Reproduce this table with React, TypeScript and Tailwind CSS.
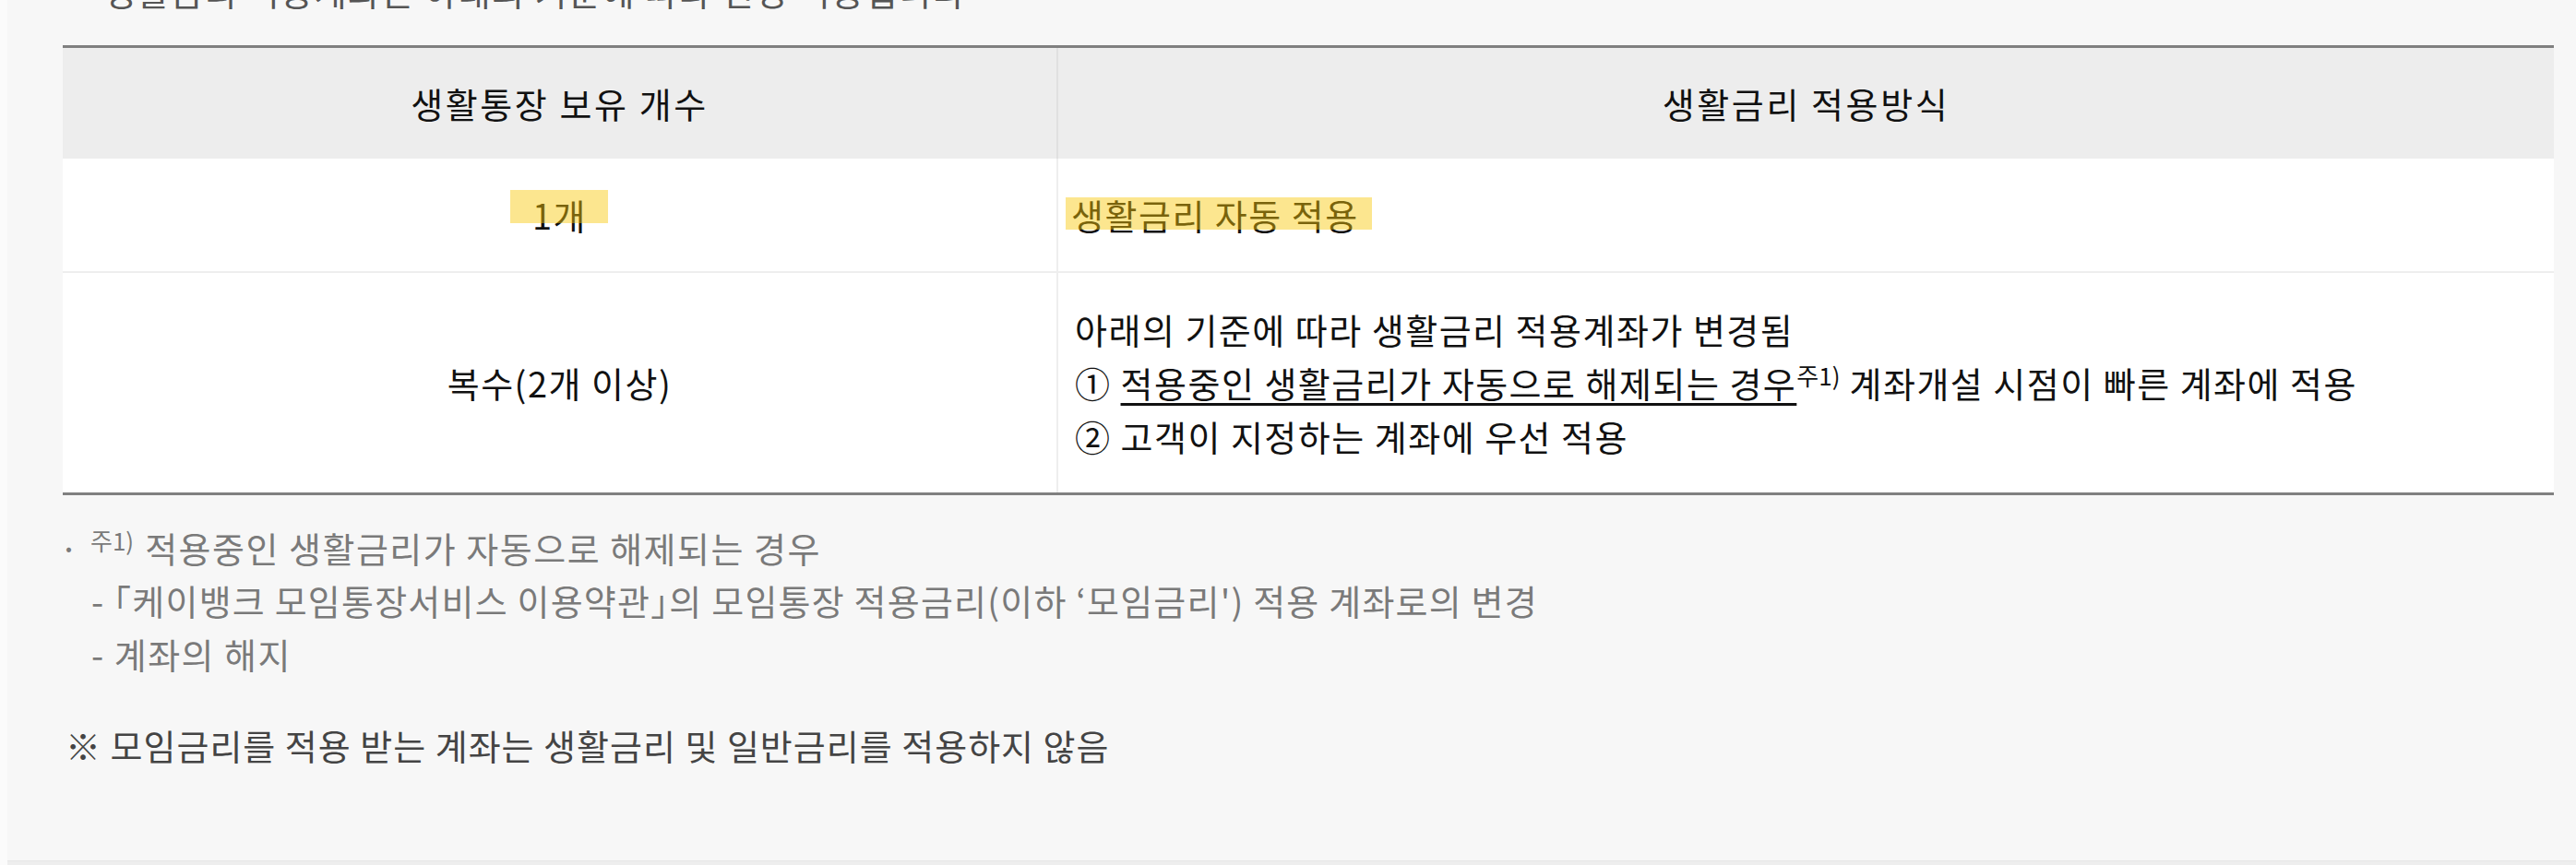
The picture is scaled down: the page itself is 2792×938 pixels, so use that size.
import React from 'react';

// Highlighter mark drawn over the text, like a marker pen
function Marker({ children, box }: { children: React.ReactNode; box: string }) {
  return (
    <span className="relative inline-block">
      {children}
      <span className={`pointer-events-none absolute bg-[#f9c807]/45 ${box}`} />
    </span>
  );
}

export default function App() {
  return (
    <div className="h-[938px] overflow-hidden bg-[#fbfbfb] pl-2 font-['Noto_Sans_CJK_KR','Noto_Sans_CJK_SC',sans-serif] text-[38px] leading-[57.6px] tracking-[1.5px] text-[#111]">
      <div className="h-[933px] overflow-hidden bg-[#f7f7f7] pl-[60px]">
        {/* previous paragraph, scrolled mostly out of view */}
        <p className="-mt-[39px] mb-[30px] pl-[44px] text-[#555]">
          생활금리 적용계좌는 아래의 기준에 따라 변경 적용됩니다
        </p>

        <table className="w-[2700px] table-fixed border-collapse border-y-[3px] border-[#808080]">
          <colgroup>
            <col className="w-[1078px]" />
            <col />
          </colgroup>
          <thead>
            <tr className="h-[122px] bg-[#ededed] tracking-[2.6px]">
              <th className="text-center font-normal">생활통장 보유 개수</th>
              <th className="border-l-2 border-[#e0e0e0] text-center font-normal">생활금리 적용방식</th>
            </tr>
          </thead>
          <tbody className="bg-white">
            <tr className="h-[123px] border-b-2 border-[#eeeeee]">
              <td className="text-center align-middle">
                <Marker box="left-[-24px] right-[-23px] top-[2px] h-[36px]">1개</Marker>
              </td>
              <td className="border-l-2 border-[#eeeeee] pl-[14px] align-middle">
                <Marker box="left-[-6px] right-[-14px] top-[10px] h-[35px]">생활금리 자동 적용</Marker>
              </td>
            </tr>
            <tr className="h-[240px]">
              <td className="text-center align-middle">복수(2개 이상)</td>
              <td className="border-l-2 border-[#eeeeee] pl-[18px] align-middle">
                <p>아래의 기준에 따라 생활금리 적용계좌가 변경됨</p>
                <p>
                  ①{' '}
                  <span className="underline decoration-[3px] underline-offset-[6px]">
                    적용중인 생활금리가 자동으로 해제되는 경우
                  </span>
                  <sup className="text-[26px] leading-none tracking-normal">주1)</sup> 계좌개설 시점이 빠른 계좌에 적용
                </p>
                <p>② 고객이 지정하는 계좌에 우선 적용</p>
              </td>
            </tr>
          </tbody>
        </table>

        <div className="mt-[28px] text-[#7a7a7a]">
          <p className="-ml-[4px]">
            <span className="inline-block w-[34px]">·</span>
            <sup className="text-[26px] leading-none tracking-normal">주1)</sup>
            <span className="ml-[12px]">적용중인 생활금리가 자동으로 해제되는 경우</span>
          </p>
          <p className="pl-[31px] tracking-[1.2px]">
            - <span className="[font-feature-settings:'halt']">「</span>케이뱅크 모임통장서비스 이용약관
            <span className="[font-feature-settings:'halt']">」</span>의 모임통장 적용금리(이하 ‘모임금리') 적용 계좌로의 변경
          </p>
          <p className="pl-[31px]">- 계좌의 해지</p>
        </div>

        <p className="mt-[42px] pl-[3px] tracking-[1px] text-[#444]">※ 모임금리를 적용 받는 계좌는 생활금리 및 일반금리를 적용하지 않음</p>
      </div>
      <div className="h-[5px] border-t border-[#e6e6e6] bg-[#eeeeee]" />
    </div>
  );
}
